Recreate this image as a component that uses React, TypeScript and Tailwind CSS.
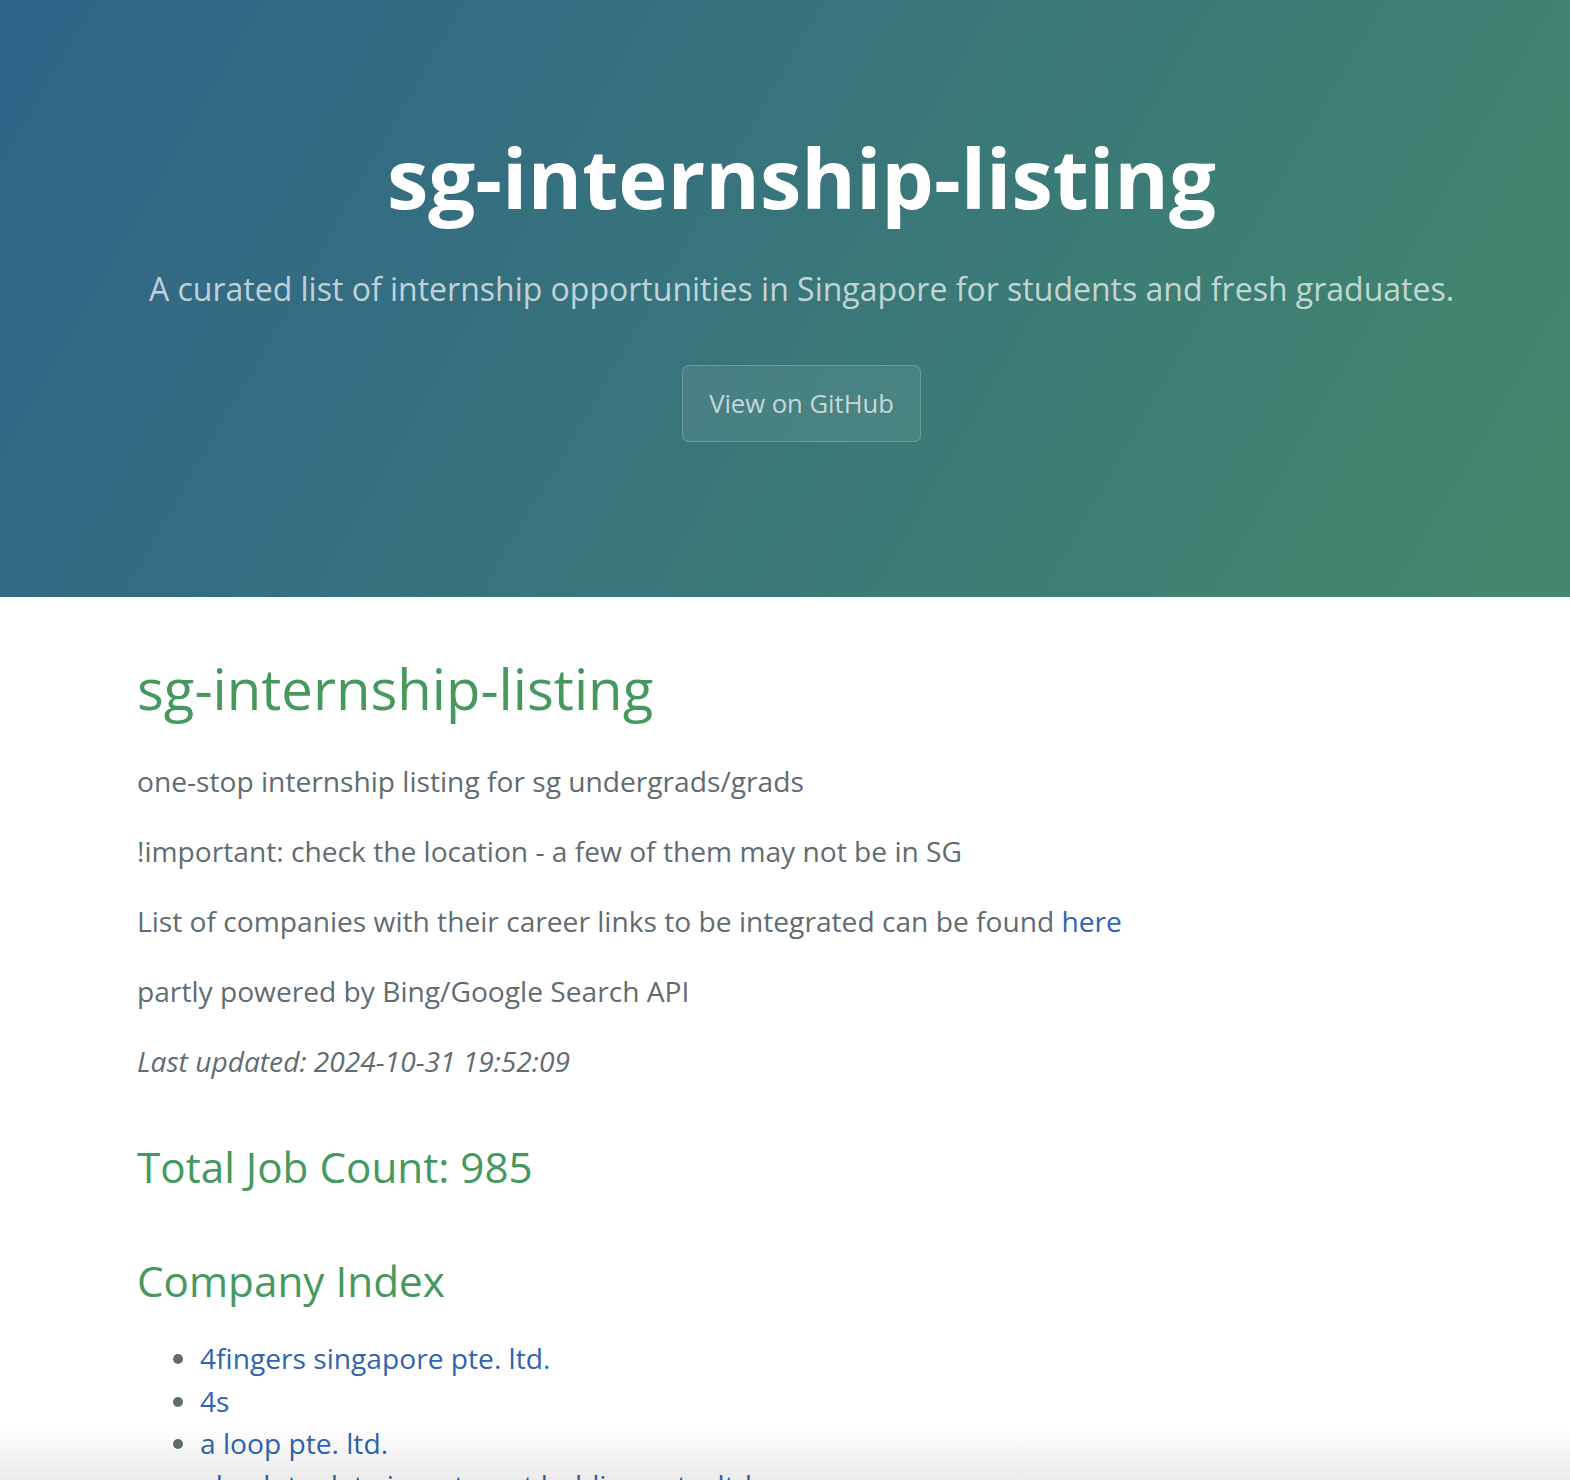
import React from "react";

const companies = [
  "4fingers singapore pte. ltd.",
  "4s",
  "a loop pte. ltd.",
  "absolute data investment holdings pte. ltd.",
  "accenture",
];

const App: React.FC = () => {
  return (
    <div className="min-h-screen bg-white font-['Open_Sans',sans-serif] text-[#606c71]">
      <header className="flex flex-col items-center bg-[linear-gradient(120deg,#2f6389,#42896b)] pt-[114px] pb-[155px] pl-[33px] text-center text-white">
        <h1 className="text-[83.2px] font-bold leading-[125px]">sg-internship-listing</h1>
        <h2 className="mt-[26px] text-[32px] leading-[48px] text-white/70">
          A curated list of internship opportunities in Singapore for students and fresh graduates.
        </h2>
        <a
          href="#"
          className="mt-[52px] rounded-[7px] border border-white/20 bg-white/[0.08] px-[26px] py-[18.5px] text-[25.6px] leading-[38px] text-white/70"
        >
          View on GitHub
        </a>
      </header>

      <main className="px-[137px] pt-[49px] text-[28.16px] leading-[42.24px]">
        <h1 className="mb-[29px] text-[56.3px] leading-[84.5px] text-[#46995e]">sg-internship-listing</h1>
        <p className="mb-[28px]">one-stop internship listing for sg undergrads/grads</p>
        <p className="mb-[28px]">!important: check the location - a few of them may not be in SG</p>
        <p className="mb-[28px]">
          List of companies with their career links to be integrated can be found{" "}
          <a href="#" className="text-[#2f64b0]">
            here
          </a>
        </p>
        <p className="mb-[28px]">partly powered by Bing/Google Search API</p>
        <p className="italic">Last updated: 2024-10-31 19:52:09</p>

        <h2 className="mt-[52px] text-[42.24px] leading-[63.4px] text-[#46995e]">Total Job Count: 985</h2>
        <h2 className="mt-[51px] text-[42.24px] leading-[63.4px] text-[#46995e]">Company Index</h2>

        <ul className="mt-[25px] list-disc pl-[63px]">
          {companies.map((c) => (
            <li key={c}>
              <a href="#" className="text-[#2f64b0]">
                {c}
              </a>
            </li>
          ))}
        </ul>
      </main>

      <div className="pointer-events-none fixed inset-x-0 bottom-0 h-[55px] bg-gradient-to-b from-white to-[#ebebeb] mix-blend-multiply" />
    </div>
  );
};

export default App;
